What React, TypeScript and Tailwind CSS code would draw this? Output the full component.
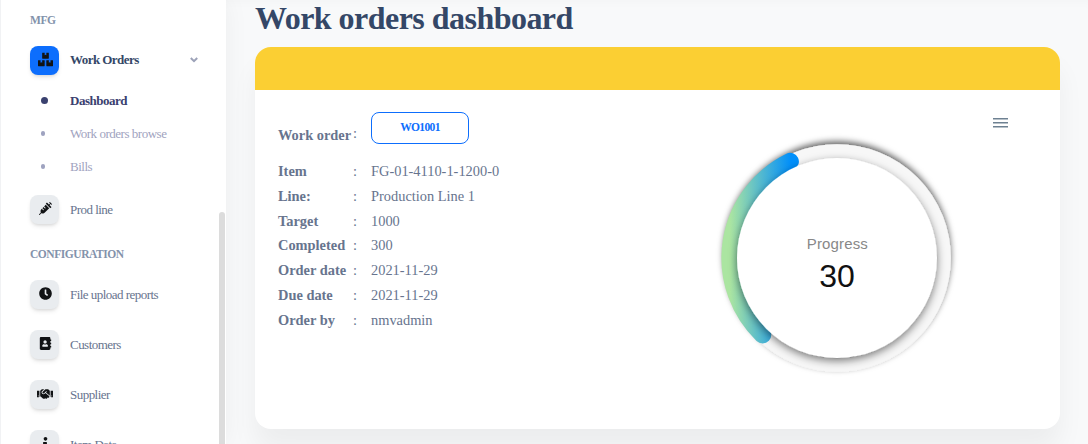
import type { ReactNode } from "react";
import { FaAddressBook, FaBoxes, FaClock, FaHandshake, FaInfo, FaSyringe } from "react-icons/fa";

function NavIcon({ children, active = false }: { children: ReactNode; active?: boolean }) {
  return (
    <span
      className={`flex h-[29px] w-[29px] shrink-0 items-center justify-center rounded-lg pb-[2px] pl-px text-[#111315] shadow-[0_3px_5px_-1px_rgba(0,0,0,0.10),0_2px_3px_-1px_rgba(0,0,0,0.08)] ${
        active ? "bg-[#0d6efd]" : "bg-[#e9ecef]"
      }`}
    >
      {children}
    </span>
  );
}

function NavItem({ icon, label }: { icon: ReactNode; label: string }) {
  return (
    <a className="flex h-[29px] items-center gap-[11px] text-[13px] tracking-[-0.53px] text-[#67748e]">
      <NavIcon>{icon}</NavIcon>
      <span className="whitespace-nowrap">{label}</span>
    </a>
  );
}

function SubItem({ label, active = false }: { label: string; active?: boolean }) {
  return (
    <a
      className={`flex h-[33px] items-center text-[13px] tracking-[-0.48px] ${
        active ? "font-bold text-[#3a416f]" : "text-[#9fa3c0]"
      }`}
    >
      <span className="flex w-[29px] justify-center">
        <span className={active ? "size-[7px] rounded-full bg-[#3a416f]" : "mr-[4px] h-[5px] w-[4px] rounded-full bg-[#9fa3c0]"} />
      </span>
      <span className="ml-[11px]">{label}</span>
    </a>
  );
}

const rows = [
  ["Item", "FG-01-4110-1-1200-0"],
  ["Line:", "Production Line 1"],
  ["Target", "1000"],
  ["Completed", "300"],
  ["Order date", "2021-11-29"],
  ["Due date", "2021-11-29"],
  ["Order by", "nmvadmin"],
];

function ProgressChart() {
  return (
    <svg width="260" height="260" viewBox="0 0 260 260">
      <defs>
        <linearGradient id="arc" gradientUnits="userSpaceOnUse" x1="23" x2="84" y1="0" y2="0">
          <stop offset="0" stopColor="#abe5a1" />
          <stop offset="1" stopColor="#008ffb" />
        </linearGradient>
        <filter id="trackShadow" x="-10%" y="-10%" width="120%" height="120%">
          <feDropShadow dx="0" dy="-3" stdDeviation="3" floodColor="#000" floodOpacity="0.6" />
        </filter>
        <filter id="hollowShadow" x="-10%" y="-10%" width="120%" height="120%">
          <feDropShadow dx="0" dy="3" stdDeviation="4" floodColor="#000" floodOpacity="0.5" />
        </filter>
      </defs>
      <circle cx="130" cy="130" r="107" fill="none" stroke="#f7f7f7" strokeWidth="13.6" filter="url(#trackShadow)" />
      <path d="M55.6 206.8A107.3 107.3 0 0 1 83.2 33.5" fill="none" stroke="url(#arc)" strokeWidth="17.4" strokeLinecap="round" />
      <circle cx="130" cy="130" r="100" fill="#fff" filter="url(#hollowShadow)" />
      <text x="130.3" y="121" textAnchor="middle" fill="#888" fontSize="15" textLength="61" className="font-['Liberation_Sans',sans-serif]">
        Progress
      </text>
      <text x="130" y="158.5" textAnchor="middle" fill="#111" fontSize="32" className="font-['Liberation_Sans',sans-serif]">
        30
      </text>
    </svg>
  );
}

export default function App() {
  return (
    <div className="flex h-[444px] w-[1088px] overflow-hidden bg-[#f8f9fa] font-['Liberation_Serif',serif]">
      <aside className="flex h-full w-[226px] shrink-0 border-l border-[#f1f2f4] bg-white shadow-[0_0_24px_rgba(0,0,0,0.05)]">
        <nav className="w-[218px] shrink-0 pl-[29px]">
          <h6 className="mt-[12px] h-[16px] text-[11.5px] leading-4 font-bold tracking-[-0.45px] text-[#8392ab]">MFG</h6>
          <a className="mt-[18px] flex h-[29px] items-center text-[13px] font-bold tracking-[-0.55px] text-[#344767]">
            <NavIcon active>
              <FaBoxes size={15} />
            </NavIcon>
            <span className="mb-px ml-[11px] flex-1">Work Orders</span>
            <svg className="mr-[21px] mb-[2px]" width="8" height="6" viewBox="0 0 8 6" fill="none" stroke="#9ca2b8" strokeWidth="2">
              <path d="M.8 1 4 4.2 7.2 1" />
            </svg>
          </a>
          <div className="mt-[9px]">
            <SubItem label="Dashboard" active />
            <SubItem label="Work orders browse" />
            <SubItem label="Bills" />
          </div>
          <div className="mt-[12px]">
            <NavItem icon={<FaSyringe size={13} />} label="Prod line" />
          </div>
          <h6 className="mt-[22px] h-[16px] text-[11.5px] leading-4 font-bold tracking-[-0.45px] text-[#8392ab]">CONFIGURATION</h6>
          <div className="mt-[18px] flex flex-col gap-[21px]">
            <NavItem icon={<FaClock size={13} />} label="File upload reports" />
            <NavItem icon={<FaAddressBook size={13} />} label="Customers" />
            <NavItem icon={<FaHandshake size={16} />} label="Supplier" />
            <NavItem icon={<FaInfo size={13} />} label="Item Data" />
          </div>
        </nav>
        <div className="mt-[212px] w-[6px] rounded-t-[3px] bg-[#dcdcdc]" />
      </aside>

      <main className="flex-1 pl-[29px] shadow-[inset_0_8px_12px_-8px_rgba(0,0,0,0.03)]">
        <h1 className="h-[47px] text-[32px] leading-[36px] font-bold tracking-[-0.53px] text-[#344767]">Work orders dashboard</h1>
        <section className="h-[382px] w-[805px] overflow-hidden rounded-2xl bg-white shadow-[0_20px_27px_0_rgba(0,0,0,0.05)]">
          <div className="h-[43px] bg-[#fbcf33]" />
          <div className="flex">
            <div className="w-[436px] pt-[22px] pl-[23px] text-[14.4px] text-[#67748e]">
              <div className="flex h-[47.4px]">
                <span className="w-[75px] pt-[13px] leading-[20px] font-bold whitespace-nowrap">Work order</span>
                <span className="w-[18px] pt-[11px] leading-[20px]">:</span>
                <button className="flex h-[32px] w-[98px] items-center justify-center rounded-lg border border-[#0d6efd] text-[11.5px] font-bold tracking-[-0.65px] text-[#0d6efd]">
                  WO1001
                </button>
              </div>
              {rows.map(([label, value]) => (
                <div key={label} className="flex h-[24.8px] items-center">
                  <span className="w-[75px] font-bold">{label}</span>
                  <span className="w-[18px]">:</span>
                  <span>{value}</span>
                </div>
              ))}
            </div>
            <div className="flex pt-[22px] pl-[16.3px]">
              <div className="mt-[15.5px]">
                <ProgressChart />
              </div>
              <svg className="mt-[5px] ml-[26px]" width="16" height="12" viewBox="0 0 16 12" fill="#6e8192">
                <path d="M0 1h15v1.5H0zM0 5h15v1.5H0zM0 9h15v1.5H0z" />
              </svg>
            </div>
          </div>
        </section>
      </main>
    </div>
  );
}
